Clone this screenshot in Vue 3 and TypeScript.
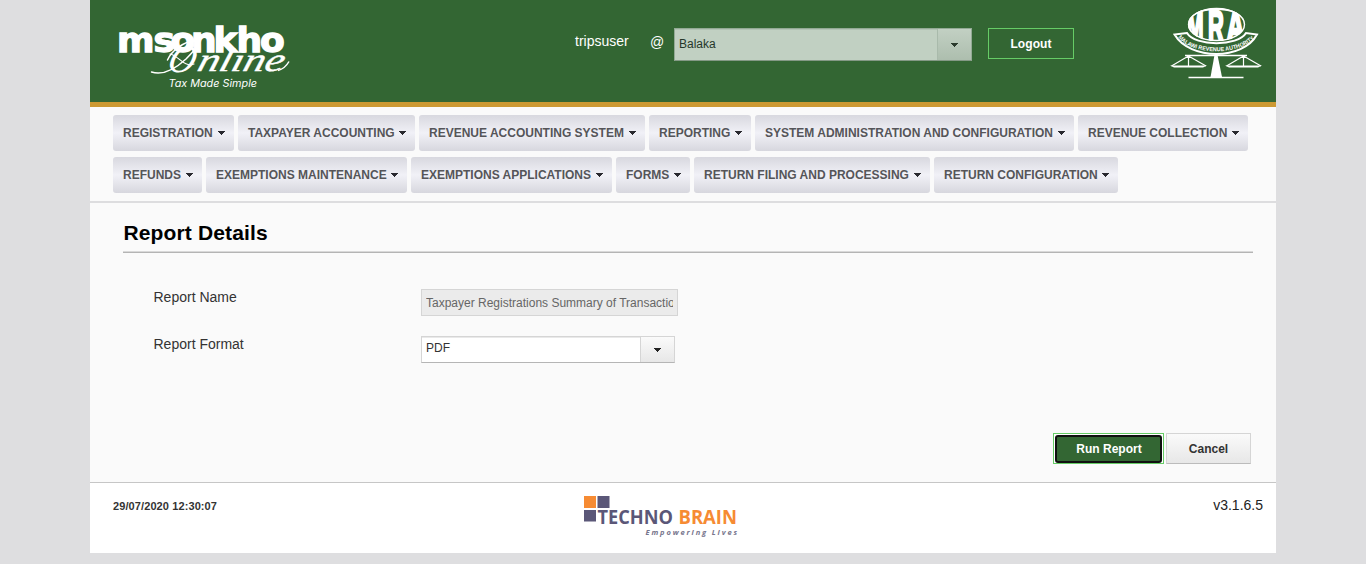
<script setup lang="ts">
import { ref } from 'vue'

interface MenuItem {
  label: string
  width: number
}

const menu: MenuItem[][] = [
  [
    { label: 'REGISTRATION', width: 121 },
    { label: 'TAXPAYER ACCOUNTING', width: 177 },
    { label: 'REVENUE ACCOUNTING SYSTEM', width: 226 },
    { label: 'REPORTING', width: 102 },
    { label: 'SYSTEM ADMINISTRATION AND CONFIGURATION', width: 319 },
    { label: 'REVENUE COLLECTION', width: 170 },
  ],
  [
    { label: 'REFUNDS', width: 89 },
    { label: 'EXEMPTIONS MAINTENANCE', width: 201 },
    { label: 'EXEMPTIONS APPLICATIONS', width: 201 },
    { label: 'FORMS', width: 74 },
    { label: 'RETURN FILING AND PROCESSING', width: 236 },
    { label: 'RETURN CONFIGURATION', width: 184 },
  ],
]

const reportName = ref('Taxpayer Registrations Summary of Transactions')
</script>

<template>
  <div class="page">
    <header class="header">
      <svg class="brand" width="180" height="76" viewBox="114 20 180 76">
        <text class="brand-main" transform="translate(0 51.500) scale(1 .92)" x="117 153.500 170.500 191 213.500 236.500 260">msonkho</text>
        <g fill="none" stroke="#fff" stroke-linecap="round">
          <path d="M151.500 72C162 75.500 174 70 186 59C196 49 203 40 193 41C184 42 172 50 167.500 60" stroke-width="1.500" />
          <path d="M170 54C178 55 184 68 194 64" stroke-width="1.200" />
        </g>
        <text class="brand-o" transform="translate(166 71.500) skewX(-14)">O</text>
        <text class="brand-script" transform="translate(196 71) skewX(-16)" textLength="86" lengthAdjust="spacingAndGlyphs">nline</text>
        <path d="M278 70.500C284 69 287 65 289 61.500" fill="none" stroke="#fff" stroke-width="1.500" />
        <text class="brand-tag" x="168.500" y="86.500" textLength="88.500" lengthAdjust="spacingAndGlyphs">Tax Made Simple</text>
      </svg>

      <div class="session">
        <span class="user">tripsuser</span>
        <span class="at">@</span>
        <div class="station">
          <span class="station-value">Balaka</span>
          <span class="station-button"><svg class="caret" width="7" height="4" viewBox="0 0 7 4"><path d="M0 0H7V1H6V2H5V3H4V4H3V3H2V2H1V1H0Z" fill="#2b3a2d" /></svg></span>
        </div>
        <button class="logout">Logout</button>
      </div>

      <svg class="mra" width="96" height="76" viewBox="1168 6 96 76">
        <defs>
          <clipPath id="dome"><ellipse cx="1216.500" cy="24.500" rx="28.500" ry="16.500" /></clipPath>
          <path id="ribbon" d="M1178 37.500C1192 56 1241 56 1256 36.500" />
        </defs>
        <g clip-path="url(#dome)">
          <text class="mra-letters" transform="translate(1186.500 41.500) scale(.82 1.800)">M</text>
          <text class="mra-letters" transform="translate(1208 41.500) scale(.88 1.800)">R</text>
          <text class="mra-letters" transform="translate(1226.500 41.500) scale(1 1.800)">A</text>
          <path d="M1188 20C1194 4 1239 4 1245 20" fill="none" stroke="#fff" stroke-width="4" />
        </g>
        <ellipse cx="1216.500" cy="24.500" rx="28" ry="16" fill="none" stroke="#fff" stroke-width="1.400" />
        <path d="M1187 33L1174.500 34.500C1190 60.500 1243 60.500 1257 34.500L1246 33C1238 46.500 1195 46.500 1187 33Z" fill="#336633" stroke="#fff" stroke-width="2" />
        <text class="mra-ribbon"><textPath href="#ribbon" textLength="83" lengthAdjust="spacingAndGlyphs">MALAWI REVENUE AUTHORITY</textPath></text>
        <path d="M1185 55.500H1247" stroke="#fff" stroke-width="1.600" />
        <path d="M1214.500 55H1217.500L1222 77H1210.500Z" fill="#fff" />
        <path d="M1188.500 77.500H1243.500" stroke="#fff" stroke-width="1.300" />
        <g fill="none" stroke="#fff" stroke-width="1.200">
          <path d="M1188.500 56L1171.500 66M1188.500 56L1206 66M1188.500 56V66M1243.500 56L1226.500 66M1243.500 56L1261 66M1243.500 56V66" />
        </g>
        <path d="M1170 65.500H1207L1203 67.500H1174ZM1225 65.500H1262L1258 67.500H1229Z" fill="#fff" />
      </svg>
    </header>

    <nav class="nav">
      <div v-for="(row, i) in menu" :key="i" class="nav-row">
        <a v-for="item in row" :key="item.label" class="nav-item" :style="{ width: item.width + 'px' }">
          <span>{{ item.label }}</span>
          <svg class="caret" width="7" height="4" viewBox="0 0 7 4"><path d="M0 0H7V1H6V2H5V3H4V4H3V3H2V2H1V1H0Z" fill="#29292f" /></svg>
        </a>
      </div>
    </nav>

    <main class="content">
      <h1>Report Details</h1>
      <div class="field">
        <label>Report Name</label>
        <input class="name" type="text" disabled :value="reportName" />
      </div>
      <div class="field format">
        <label>Report Format</label>
        <div class="select">
          <span class="select-value">PDF</span>
          <span class="select-button"><svg class="caret" width="7" height="4" viewBox="0 0 7 4"><path d="M0 0H7V1H6V2H5V3H4V4H3V3H2V2H1V1H0Z" fill="#222" /></svg></span>
        </div>
      </div>
      <div class="actions">
        <button class="run"><span>Run Report</span></button>
        <button class="cancel">Cancel</button>
      </div>
    </main>

    <footer class="footer">
      <span class="time">29/07/2020 12:30:07</span>
      <svg class="techno" width="156" height="44" viewBox="582 494 156 44">
        <rect x="584" y="496" width="12" height="12" fill="#f68b33" />
        <rect x="597.500" y="496" width="12" height="12" fill="#5b5778" />
        <rect x="584" y="510" width="12" height="11.500" fill="#5b5778" />
        <text class="techno-name" x="597.500" y="523.500" textLength="75.500" lengthAdjust="spacingAndGlyphs" fill="#5b5778">TECHNO</text>
        <text class="techno-name" x="678.500" y="523.500" textLength="58.500" lengthAdjust="spacingAndGlyphs" fill="#f68b33">BRAIN</text>
        <text class="techno-tag" x="645.500" y="534.500" textLength="91.500">Empowering Lives</text>
      </svg>
      <span class="version">v3.1.6.5</span>
    </footer>
  </div>
</template>

<style>
body {
  margin: 0;
  background: #dedee0;
}
</style>

<style scoped>
.page {
  width: 1186px;
  height: 553px;
  margin: 0 90px 11px;
  background: #fafafa;
  font-family: 'Liberation Sans', Arial, sans-serif;
  color: #333;
  display: flex;
  flex-direction: column;
}
.page * {
  box-sizing: border-box;
}
.page svg {
  display: block;
  flex: none;
}
.caret {
  shape-rendering: crispEdges;
}
.page button {
  font-family: inherit;
  margin: 0;
  padding: 0;
  border-radius: 0;
}
.header {
  height: 107px;
  flex: none;
  background: #336633;
  border-bottom: 5px solid #cc9933;
  display: flex;
  align-items: flex-start;
}
.brand {
  margin: 20px 0 0 24px;
}
.brand-main {
  font: bold 36px 'DejaVu Sans', sans-serif;
  fill: #fff;
  stroke: #fff;
  stroke-width: 1.4px;
}
.brand-o {
  font: italic 38px 'Liberation Serif', serif;
  fill: #fff;
}
.brand-script {
  font: italic 33px 'Liberation Serif', serif;
  fill: #fff;
  stroke: #fff;
  stroke-width: 0.4px;
}
.brand-tag {
  font: italic 10.5px Inter, sans-serif;
  fill: #fff;
}
.session {
  margin: 28px 0 0 281px;
  display: flex;
  align-items: flex-start;
  color: #fff;
  font-size: 14px;
}
.user {
  width: 75px;
  line-height: 26px;
}
.at {
  width: 24px;
  line-height: 28px;
}
.station {
  width: 298px;
  height: 33px;
  border: 1px solid #93aa95;
  border-bottom-color: #849986;
  background: #c1d0c2;
  display: flex;
  color: #26382a;
  font-size: 12px;
}
.station-value {
  flex: 1;
  padding-left: 4px;
  line-height: 30px;
  box-shadow: inset 0 1px #b2c3b4;
}
.station-button {
  width: 34px;
  padding-top: 1px;
  border-left: 1px solid #a9baab;
  background: linear-gradient(#c2d0c3, #adbeae);
  display: flex;
  align-items: center;
  justify-content: center;
}
.logout {
  width: 86px;
  height: 31px;
  margin-left: 16px !important;
  border: 1px solid #66cc66;
  background: #336633;
  color: #fff;
  font-size: 12px;
  letter-spacing: 0.1px;
  font-weight: bold;
}
.mra {
  margin: 6px 0 0 94px;
}
.mra-letters {
  font: bold 25px 'Liberation Sans', sans-serif;
  fill: #fff;
  stroke: #fff;
  stroke-width: 1.5px;
}
.mra-ribbon {
  font: bold 5.8px 'Liberation Sans', sans-serif;
  fill: #fff;
}
.nav {
  height: 96px;
  flex: none;
  padding: 8px 23px 0;
  border-bottom: 2px solid #dddddf;
  display: flex;
  flex-direction: column;
  gap: 6px;
}
.nav-row {
  display: flex;
  gap: 4px;
}
.nav-item {
  height: 36px;
  flex: none;
  padding: 0 9px 0 10px;
  border-radius: 3px;
  background: linear-gradient(#d8d8df, #f1f1f7 50%, #d7d7de);
  display: flex;
  align-items: center;
  justify-content: space-between;
  white-space: nowrap;
  font-size: 12px;
  font-weight: bold;
  color: #555559;
}
.content {
  height: 279px;
  flex: none;
  padding: 16px 23px 0 33px;
  display: flex;
  flex-direction: column;
}
h1 {
  margin: 0;
  height: 34px;
  border-bottom: 1px solid #b4b4b4;
  box-shadow: inset 0 -1px #d9d9d9;
  padding-left: 0.5px;
  font-size: 21px;
  line-height: 27px;
  letter-spacing: 0.13px;
  color: #000;
}
.field {
  display: flex;
  margin: 36px 0 0 30.5px;
  height: 27px;
  font-size: 14px;
}
.format {
  margin-top: 20px;
}
.field label {
  width: 267.5px;
  line-height: 16px;
}
.name {
  width: 257px;
  height: 27px;
  padding: 0 4px;
  border: 1px solid #d5d5d5;
  background: #ebebeb;
  color: #666;
  font: 12px 'Liberation Sans', Arial, sans-serif;
}
.select {
  width: 254px;
  height: 27px;
  border: 1px solid #d5d5d5;
  border-bottom-color: #b5b5b5;
  background: #fff;
  display: flex;
  font-size: 12px;
}
.select-value {
  flex: 1;
  padding-left: 4px;
  line-height: 22px;
  box-shadow: inset 0 1px #e9e9e9;
}
.select-button {
  width: 34px;
  border-left: 1px solid #d5d5d5;
  background: linear-gradient(#fafafa, #e7e7e7);
  display: flex;
  align-items: center;
  justify-content: center;
}
.actions {
  display: flex;
  justify-content: flex-end;
  gap: 2px;
  margin: 70px 2px 0 0;
}
.run {
  width: 111px;
  height: 31px;
  border: 1px solid #66cc66 !important;
  background: #fff;
  color: #fff;
  font-size: 12px;
  font-weight: bold;
}
.run span {
  display: block;
  height: 28px;
  margin: 0 1px;
  border: 2px solid #101010;
  border-radius: 3px;
  background: #336633;
  line-height: 24px;
  padding-left: 1px;
}
.cancel {
  width: 85px;
  height: 31px;
  border: 1px solid #d5d5d5;
  border-bottom-color: #bbb;
  background: linear-gradient(#fafafa, #e7e7e7);
  color: #333;
  font-size: 12px;
  font-weight: bold;
}
.footer {
  height: 71px;
  flex: none;
  border-top: 1px solid #c6c6c6;
  background: #fff;
  display: flex;
  padding: 0 13px 0 23px;
}
.time {
  width: 469px;
  font-size: 11px;
  letter-spacing: 0.1px;
  font-weight: bold;
  line-height: 47px;
}
.techno {
  margin-top: 11px;
}
.techno-name {
  font: bold 19.5px 'Open Sans', sans-serif;
}
.techno-tag {
  font: italic bold 7.5px 'Open Sans', sans-serif;
  fill: #77758c;
}
.version {
  margin-left: auto;
  font-size: 14px;
  line-height: 44px;
  color: #222;
}
</style>
